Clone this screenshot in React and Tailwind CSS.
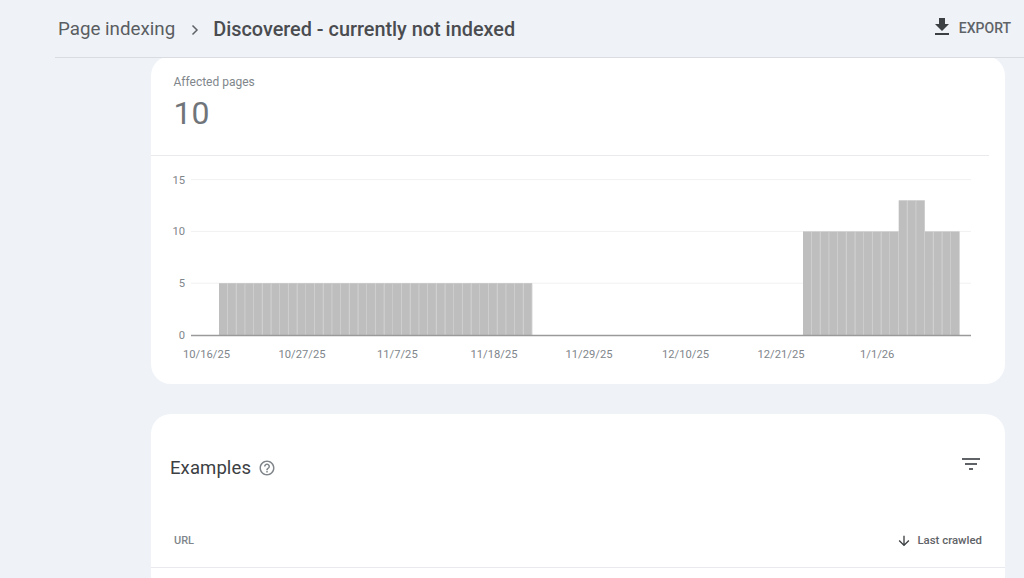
const BAR_W = 8.7;
const bars = [
  ...Array.from({ length: 36 }, (_, i) => ({ x: 219 + i * BAR_W, v: 5 })),
  ...Array.from({ length: 18 }, (_, i) => ({ x: 803 + i * BAR_W, v: i >= 11 && i < 14 ? 13 : 10 })),
];
const yOf = (v) => 335 - v * 10.36;
const dates = [
  ["10/16/25", 183], ["10/27/25", 278.5], ["11/7/25", 377], ["11/18/25", 470.5],
  ["11/29/25", 565.5], ["12/10/25", 662], ["12/21/25", 757.5], ["1/1/26", 860],
];

function Chart() {
  return (
    <svg width="854" height="228" viewBox="151 156 854 228" className="block">
      {[15, 10, 5].map((v) => (
        <line key={v} x1="191" x2="971" y1={yOf(v)} y2={yOf(v)} stroke="#f1f1f1" strokeWidth="1" />
      ))}
      {bars.map((b, i) => (
        <rect key={i} x={b.x} y={yOf(b.v)} width={BAR_W} height={335 - yOf(b.v)} fill="#bebebe" />
      ))}
      {bars.slice(0, -1).map((b, i) => (
        <rect key={"g" + i} x={b.x + BAR_W - 0.7} y={yOf(b.v) + 1} width="0.7" height={334 - yOf(b.v)} fill="#d0d0d0" />
      ))}
      <line x1="191" x2="971" y1="335.5" y2="335.5" stroke="#9a9a9a" strokeWidth="1.5" />
      {[15, 10, 5, 0].map((v) => (
        <text key={v} x="185" y={yOf(v) + 4} textAnchor="end" fontSize="11.2" fill="#80868b" fontFamily="Roboto, sans-serif">{v}</text>
      ))}
      {dates.map(([t, x]) => (
        <text key={t} x={x} y="358" fontSize="11.2" fill="#80868b" fontFamily="Roboto, sans-serif">{t}</text>
      ))}
    </svg>
  );
}

export default function App() {
  return (
    <div className="h-[578px] w-[1024px] overflow-hidden bg-[#eff3f8] font-['Roboto',sans-serif]">
      <div className="relative z-10 h-[58px] bg-[#eff3f8] pl-[55px]">
        <header className="flex h-[58px] items-center border-b border-[#d9dde1] pl-[3px] pr-[13px] pt-[2px]">
          <span className="text-[18.75px] text-[#5a5d61]">Page indexing</span>
          <svg width="12" height="12" viewBox="0 0 12 12" className="ml-[14px] mr-[12px]" fill="none">
            <path d="M3.5 1.5 8 6l-4.5 4.5" stroke="#5f6368" strokeWidth="1.5" />
          </svg>
          <span className="text-[19.85px] font-medium text-[#4a4c50]">Discovered - currently not indexed</span>
          <div className="ml-auto -mt-[2px] flex items-center gap-[5px]">
            <svg width="24" height="24" viewBox="0 0 24 24" fill="#3c4043" className="-mt-[4px]">
              <path d="M19 9h-4V3H9v6H5l7 7 7-7zM5 18v2h14v-2H5z" />
            </svg>
            <span className="text-[14px] font-medium text-[#5f6368]">EXPORT</span>
          </div>
        </header>
      </div>
      <main className="ml-[151px] w-[854px]">
        <section className="-mt-[2px] h-[328px] rounded-[20px] bg-white">
          <div className="h-[99px] pl-[22.5px] pt-[19px]">
            <div className="text-[12px] leading-[14px] text-[#80868b]">Affected pages</div>
            <div className="mt-[5px] text-[32px] leading-[38px] text-[#70757a]">10</div>
          </div>
          <div className="mr-[16px] h-px bg-[#e8eaed]" />
          <Chart />
        </section>
        <section className="mt-[30px] h-[300px] rounded-[20px] bg-white">
          <div className="flex h-[108px] items-center pl-[19px] pr-[22px]">
            <span className="mt-[2px] text-[18.5px] tracking-[0.1px] text-[#3c4043]">Examples</span>
            <svg width="18" height="18" viewBox="0 0 24 24" fill="#80868b" className="ml-[7px]">
              <path d="M11 18h2v-2h-2v2zm1-16C6.48 2 2 6.48 2 12s4.48 10 10 10 10-4.48 10-10S17.52 2 12 2zm0 18c-4.41 0-8-3.59-8-8s3.59-8 8-8 8 3.59 8 8-3.59 8-8 8zm0-14c-2.21 0-4 1.79-4 4h2c0-1.1.9-2 2-2s2 .9 2 2c0 2-3 1.75-3 5h2c0-2.25 3-2.5 3-5 0-2.21-1.79-4-4-4z" />
            </svg>
            <svg width="24" height="24" viewBox="0 0 24 24" fill="#5f6368" className="ml-auto -mt-[8px]">
              <path d="M10 18h4v-2h-4v2zM3 6v2h18V6H3zm3 7h12v-2H6v2z" />
            </svg>
          </div>
          <div className="flex h-[46px] items-center justify-between border-b border-[#e8eaed] pb-[7px] pl-[23px] pr-[23px]">
            <span className="text-[11px] font-medium text-[#80868b]">URL</span>
            <div className="flex items-center gap-[5px]">
              <svg width="16" height="16" viewBox="0 0 24 24" fill="#3c4043">
                <path d="m20 12-1.41-1.41L13 16.17V4h-2v12.17l-5.58-5.59L4 12l8 8 8-8z" />
              </svg>
              <span className="text-[11.4px] font-medium text-[#5f6368]">Last crawled</span>
            </div>
          </div>
        </section>
      </main>
    </div>
  );
}
